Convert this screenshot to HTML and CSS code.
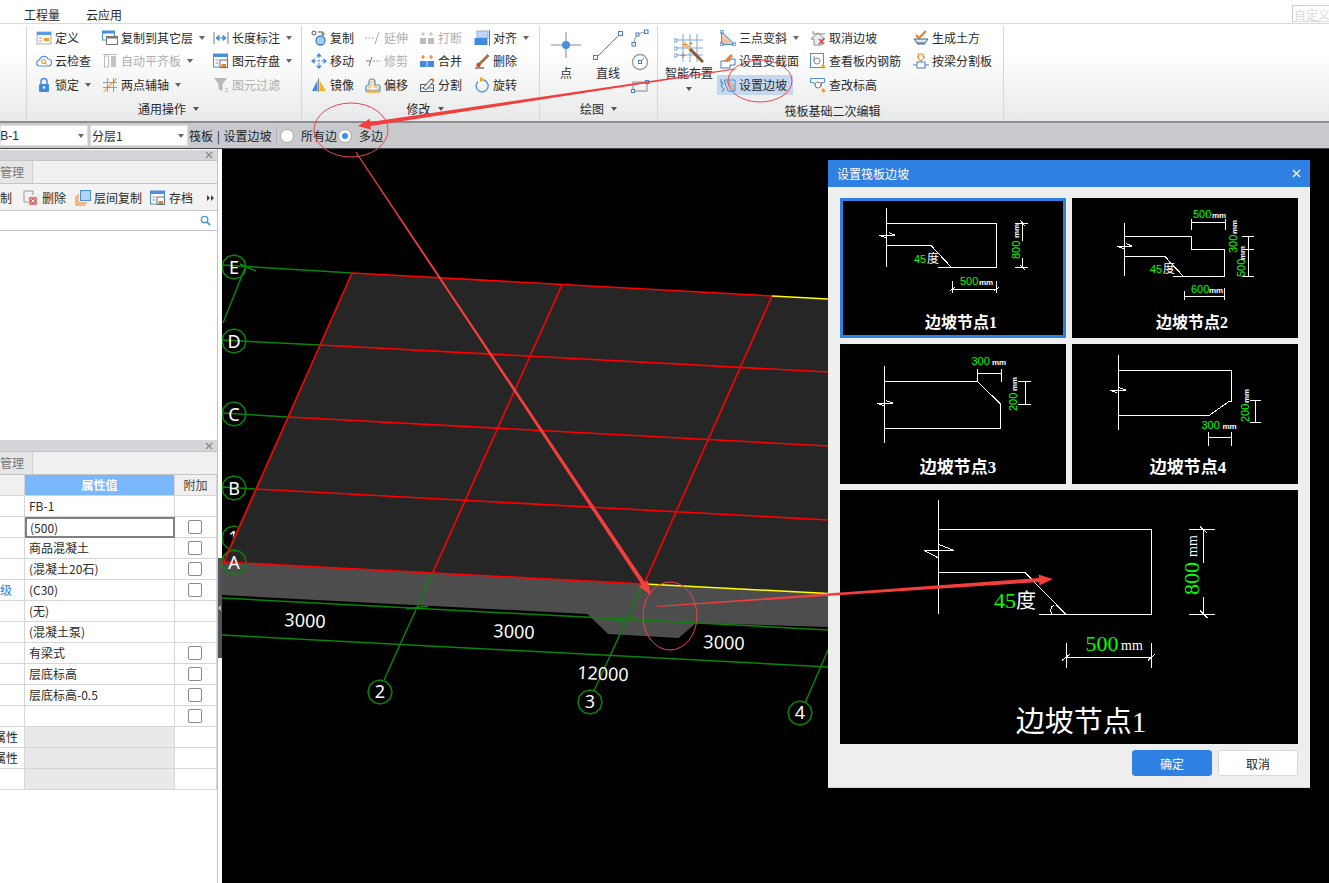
FILE: index.html
```html
<!DOCTYPE html>
<html lang="zh-CN">
<head>
<meta charset="utf-8">
<title>设置筏板边坡</title>
<link rel="stylesheet" href="styles.css">
</head>
<body>
<div class="app">
  <div class="topbar">
    <span class="tab">工程量</span>
    <span class="tab">云应用</span>
    <span class="custom">自定义界面</span>
  </div>

  <div class="ribbon">
    <div class="grp g0"><div class="stub">项</div></div>

    <div class="grp g1">
      <div class="cols">
        <div class="col c1">
          <div class="it"><svg class="ic" viewBox="0 0 16 16"><rect x="1" y="2" width="14" height="12" fill="#f6f6f6" stroke="#b0b0b0"/><rect x="1" y="2" width="14" height="3" fill="#5b9be0"/><path d="M3 8h3M3 11h3" stroke="#aaa"/><path d="M8 8h5v3H8z" fill="#f0a030"/></svg><span>定义</span></div>
          <div class="it"><svg class="ic" viewBox="0 0 16 16"><path d="M4 13a3 3 0 0 1-.5-6 4.500 4.500 0 0 1 8.500-1 3.500 3.500 0 0 1 0 7z" fill="#fff" stroke="#4f97e6" stroke-width="1.200"/><circle cx="7.500" cy="8.500" r="2" fill="none" stroke="#ee7d20"/><path d="M9 10l2 1.500" stroke="#ee7d20"/></svg><span>云检查</span></div>
          <div class="it"><svg class="ic" viewBox="0 0 16 16"><path d="M5 7V4.500a3 3 0 0 1 6 0V7" fill="none" stroke="#4a8fdc" stroke-width="1.500"/><rect x="3" y="7" width="10" height="8" rx="1" fill="#3f8be0"/><circle cx="8" cy="10.500" r="1.300" fill="#fff"/></svg><span>锁定</span><i class="caret"></i></div>
        </div>
        <div class="col c2">
          <div class="it"><svg class="ic" viewBox="0 0 16 16"><rect x="0.500" y="1" width="12" height="9" fill="#fff" stroke="#4a8fdc"/><rect x="0.500" y="1" width="12" height="2.500" fill="#4a8fdc"/><rect x="4.500" y="6.500" width="11" height="8" fill="#fff" stroke="#777"/><rect x="4.500" y="6.500" width="11" height="2" fill="#777"/></svg><span>复制到其它层</span><i class="caret"></i></div>
          <div class="it off"><svg class="ic" viewBox="0 0 16 16"><path d="M1 1.500h14" stroke="#bbb"/><rect x="2.500" y="3" width="4" height="11" fill="#fff" stroke="#bbb"/><rect x="9" y="3" width="5" height="11" fill="#c4c4c4"/></svg><span>自动平齐板</span><i class="caret"></i></div>
          <div class="it"><svg class="ic" viewBox="0 0 16 16"><path d="M5.500 1v14M11.500 1v14M1 5.500h14M1 10.500h14" stroke="#9a9a9a"/><path d="M1.500 15L14.500 1.500" stroke="#ee7d20"/></svg><span>两点辅轴</span><i class="caret"></i></div>
        </div>
        <div class="col c3">
          <div class="it"><svg class="ic" viewBox="0 0 16 16"><path d="M1 2v12M15 2v12" stroke="#777"/><path d="M3 8h10M3 8l3-2.500v5zM13 8l-3-2.500v5z" stroke="#4a8fdc" fill="#4a8fdc"/></svg><span>长度标注</span><i class="caret"></i></div>
          <div class="it"><svg class="ic" viewBox="0 0 16 16"><rect x="0.500" y="1" width="14" height="13" fill="#fff" stroke="#4a8fdc"/><rect x="0.500" y="1" width="14" height="3" fill="#4a8fdc"/><path d="M2.500 7h3M2.500 10h3" stroke="#888"/><rect x="7" y="7" width="7.500" height="7.500" fill="#fff" stroke="#5b6f85"/><rect x="8.500" y="11" width="4.500" height="3" fill="#ee7d20"/></svg><span>图元存盘</span><i class="caret"></i></div>
          <div class="it off"><svg class="ic" viewBox="0 0 16 16"><path d="M1 1h13L9.500 7v7l-4-2V7z" fill="#b8b8b8"/><path d="M12 12h3M12 14.500h3" stroke="#bbb"/></svg><span>图元过滤</span></div>
        </div>
      </div>
      <div class="lab"><span>通用操作</span><i class="caret dark"></i></div>
    </div>

    <div class="grp g2">
      <div class="cols">
        <div class="col m1">
          <div class="it"><svg class="ic" viewBox="0 0 16 16"><circle cx="3" cy="3" r="2" fill="#fff" stroke="#555"/><path d="M7 2h5v3M10.500 3.500L12 5.500l1.500-2" fill="none" stroke="#555"/><circle cx="9.500" cy="10.500" r="4.500" fill="#a9cdf2" stroke="#3f7fc5" stroke-width="1.300"/></svg><span>复制</span></div>
          <div class="it"><svg class="ic" viewBox="0 0 16 16"><path d="M8 0l3 3.500H5zM8 16l3-3.500H5zM0 8l3.500-3v6zM16 8l-3.500-3v6z" fill="#3f8be0"/><path d="M8 3v10M3 8h10" stroke="#3f8be0" stroke-dasharray="2 1.500"/></svg><span>移动</span></div>
          <div class="it"><svg class="ic" viewBox="0 0 16 16"><path d="M7.500 1v14" stroke="#888"/><path d="M6.500 3v11H1z" fill="#3f8be0"/><path d="M8.500 3v11H15z" fill="#f5b32e"/></svg><span>镜像</span></div>
        </div>
        <div class="col m2">
          <div class="it off"><svg class="ic" viewBox="0 0 16 16"><path d="M0 8h2M3.500 8h2M7 8h2" stroke="#aaa"/><path d="M14 2L10 14" stroke="#aaa"/></svg><span>延伸</span></div>
          <div class="it off"><svg class="ic" viewBox="0 0 16 16"><path d="M1 8h4M7 4L4 13" stroke="#777"/><path d="M8 8h2M11.500 8h2M14.500 8h1" stroke="#999"/></svg><span>修剪</span></div>
          <div class="it"><svg class="ic" viewBox="0 0 16 16"><path d="M1 14V10a2 2 0 0 1 2-2h1V5a3 3 0 0 1 6 0v3h3a2 2 0 0 1 2 2v4z" fill="#fff" stroke="#3f8be0" stroke-width="1.200"/><path d="M3 13v-2a1 1 0 0 1 1-1h2V5.500a1.500 1.500 0 0 1 3 0V10h3a1 1 0 0 1 1 1v2z" fill="none" stroke="#f5a623"/><path d="M1 15h14" stroke="#f5a623" stroke-width="1.300"/></svg><span>偏移</span></div>
        </div>
        <div class="col m3">
          <div class="it off"><svg class="ic" viewBox="0 0 16 16"><path d="M4 2v4M2 4h4M12 2v4M10 4h4" stroke="#bbb"/><rect x="1" y="8" width="6" height="6" fill="#bdbdbd"/><rect x="9" y="8" width="6" height="6" fill="#bdbdbd"/></svg><span>打断</span></div>
          <div class="it"><svg class="ic" viewBox="0 0 16 16"><path d="M4 2v4M2 4h4M12 2v4M10 4h4" stroke="#ee7d20" stroke-width="1.200"/><rect x="1" y="8" width="7" height="6" fill="#3f8be0"/><rect x="8" y="8" width="7" height="6" fill="#3f8be0"/><path d="M8 8v6" stroke="#cfe1f6"/></svg><span>合并</span></div>
          <div class="it"><svg class="ic" viewBox="0 0 16 16"><path d="M1.500 14.500V7.500h13v7z" fill="#fff" stroke="#4d5a68"/><path d="M1 11l13 0" stroke="#3f7fc5"/><path d="M4 11L12 2l2.500 2.500L7 13z" fill="#f3efe6" stroke="#555"/><path d="M12 2l2.500 2.500 1-1.500L13.500 1z" fill="#ee7d20"/></svg><span>分割</span></div>
        </div>
        <div class="col m4">
          <div class="it"><svg class="ic" viewBox="0 0 16 16"><rect x="3" y="1" width="11" height="7" fill="#bcd6f3" stroke="#8fb2d8"/><rect x="0.500" y="8" width="13" height="7" fill="#3f8be0"/><path d="M15.500 0v16" stroke="#777"/></svg><span>对齐</span><i class="caret"></i></div>
          <div class="it"><svg class="ic" viewBox="0 0 16 16"><path d="M1 15h9" stroke="#333"/><path d="M5 10L13.500 1.500l1.500 1.500-8.500 8.500z" fill="#b07a3c" stroke="#6d4a22" stroke-width=".6"/><circle cx="4.500" cy="12" r="2.200" fill="#c9492a"/></svg><span>删除</span></div>
          <div class="it"><svg class="ic" viewBox="0 0 16 16"><path d="M9.500 3A6 6 0 1 1 4 4.500" fill="none" stroke="#4a8fdc" stroke-width="1.300"/><path d="M6 0l5 2.500L6 5z" fill="#f5a623"/></svg><span>旋转</span></div>
        </div>
      </div>
      <div class="lab"><span>修改</span><i class="caret dark"></i></div>
    </div>

    <div class="grp g3">
      <div class="cols draw">
        <div class="big pt"><svg class="bigic" viewBox="0 0 32 32"><path d="M1 15h30M16 2v26" stroke="#888"/><circle cx="16" cy="15" r="4" fill="#4a8fdc"/></svg><span>点</span></div>
        <div class="big ln"><svg class="bigic" viewBox="0 0 32 32"><path d="M4 28L28 4" stroke="#777"/><rect x="1.500" y="25.500" width="4" height="4" fill="#fff" stroke="#3f7fc5"/><rect x="26.500" y="1.500" width="4" height="4" fill="#fff" stroke="#3f7fc5"/></svg><span>直线</span></div>
        <div class="small">
          <svg class="sic" viewBox="0 0 18 18"><path d="M3 15C3 8 7 4 14 3" fill="none" stroke="#888"/><rect x="1" y="13.500" width="3.500" height="3.500" fill="#fff" stroke="#3f7fc5"/><rect x="5" y="4" width="3" height="3" fill="#fff" stroke="#3f7fc5"/><rect x="13.500" y="1" width="3.500" height="3.500" fill="#fff" stroke="#3f7fc5"/></svg>
          <svg class="sic" viewBox="0 0 18 18"><circle cx="9" cy="9" r="7.500" fill="#fff" stroke="#999" stroke-width="1.300"/><path d="M9 9l4-4" stroke="#888"/><rect x="7.500" y="7.500" width="3" height="3" fill="#fff" stroke="#3f7fc5"/></svg>
          <svg class="sic" viewBox="0 0 18 18"><rect x="2" y="5" width="14" height="9" fill="none" stroke="#888"/><rect x="0.500" y="12.500" width="3" height="3" fill="#fff" stroke="#3f7fc5"/><rect x="14.500" y="3.500" width="3" height="3" fill="#fff" stroke="#3f7fc5"/></svg>
        </div>
      </div>
      <div class="lab"><span>绘图</span><i class="caret dark"></i></div>
    </div>

    <div class="grp g4">
      <div class="cols">
        <div class="big wiz"><svg class="wizic" viewBox="0 0 30 30"><path d="M9 1v28M16 1v28M23 1v28M1 7h28M1 15h28M1 22h28" stroke="#7aa7d9"/><path d="M0 6h3v3H0zM0 14h3v3H0zM0 21h3v3H0z" fill="#fff" stroke="#3f7fc5" stroke-width=".7"/><path d="M13 13l16 16" stroke="#8a5a30" stroke-width="3"/><path d="M13 13l3 3" stroke="#f2c27a" stroke-width="3"/><path d="M11 9v5M8.500 11.500h5M17 9v3M15.500 10.500h3M9 20v5M6.500 22.500h5" stroke="#ee7d20"/></svg><span>智能布置</span><i class="caret dark"></i></div>
        <div class="col s1">
          <div class="it"><svg class="ic" viewBox="0 0 16 16"><path d="M1.500 1.500V14.500H14.500z" fill="#f6c49c" stroke="#4a8fdc"/><rect x="0" y="0" width="3" height="3" fill="#fff" stroke="#3f7fc5"/><rect x="0" y="13" width="3" height="3" fill="#fff" stroke="#3f7fc5"/><rect x="13" y="13" width="3" height="3" fill="#fff" stroke="#3f7fc5"/></svg><span>三点变斜</span><i class="caret"></i></div>
          <div class="it"><svg class="ic" viewBox="0 0 16 16"><path d="M1 8h9v-2h5v6H10v3H1z" fill="#fff" stroke="#3f7fc5"/><path d="M4 8L11 1l2 2-6 6z" fill="#ee7d20"/></svg><span>设置变截面</span></div>
          <div class="it hl"><svg class="ic" viewBox="0 0 16 16"><path d="M1 2v4h2l-2 3 3 3-2 3" fill="none" stroke="#3f7fc5"/><path d="M4 3h11v11H8z" fill="none" stroke="#4a8fdc"/><path d="M6 4l8 9M9 4l5 6" stroke="#ee7d20"/></svg><span>设置边坡</span></div>
        </div>
        <div class="col s2">
          <div class="it"><svg class="ic" viewBox="0 0 16 16"><path d="M3 1v3h12M1 9l7-6 7 6H12v6H4V9z" fill="#eee" stroke="#8e8e8e"/><path d="M9 9l5 5M14 9l-5 5" stroke="#e0433c" stroke-width="1.500"/></svg><span>取消边坡</span></div>
          <div class="it"><svg class="ic" viewBox="0 0 16 16"><rect x="0.500" y="0.500" width="13" height="14" fill="#fff" stroke="#4a8fdc"/><circle cx="7" cy="8" r="3" fill="none" stroke="#888"/><path d="M4 3v5" stroke="#888"/><path d="M13 11l3 3-3 2-2-3z" fill="#f5a623"/></svg><span>查看板内钢筋</span></div>
          <div class="it"><svg class="ic" viewBox="0 0 16 16"><path d="M0.500 1.500h14v4h-3V9H6L3.500 5.500h-3z" fill="#fff" stroke="#4a8fdc"/><circle cx="8" cy="8" r="3" fill="#fff" stroke="#777"/><path d="M13 11l3 3-3 2-2-3z" fill="#f5a623"/></svg><span>查改标高</span></div>
        </div>
        <div class="col s3">
          <div class="it"><svg class="ic" viewBox="0 0 16 16"><path d="M3 5l3 3 7-7" fill="none" stroke="#ee7d20" stroke-width="2"/><path d="M1 9h14l-3 4H4zM4 14h8" fill="#dfe7f0" stroke="#3f5a78"/></svg><span>生成土方</span></div>
          <div class="it"><svg class="ic" viewBox="0 0 16 16"><path d="M5 1h5v3h2l-4 4-4-4h2z" fill="#fff" stroke="#ee7d20"/><rect x="4" y="9" width="8" height="6" fill="#fff" stroke="#3f7fc5"/><path d="M0 12h4M12 12h4" stroke="#3f7fc5"/></svg><span>按梁分割板</span></div>
        </div>
      </div>
      <div class="lab low"><span>筏板基础二次编辑</span></div>
    </div>
  </div>

  <div class="optbar">
    <div class="sel s-a"><span class="cutf">FB-1</span><i class="caret"></i></div>
    <div class="sel s-b"><span>分层1</span><i class="caret"></i></div>
    <span class="crumb">筏板 | 设置边坡</span>
    <span class="vsep"></span>
    <span class="radio"></span><span class="rlab">所有边</span>
    <span class="radio on"></span><span class="rlab">多边</span>
  </div>

  <div class="main">
    <aside class="side">
      <section class="panel top">
        <div class="pbar"><svg class="x" viewBox="0 0 8 8"><path d="M1 1l6 6M7 1L1 7" stroke="#888" stroke-width="1.300"/></svg></div>
        <div class="ptabs"><span class="ptab">管理</span></div>
        <div class="tools">
          <span class="tl t-a"><span class="cutl">复制</span></span>
          <span class="tl t-b"><svg class="ic" viewBox="0 0 16 16"><path d="M1 1h9v4M1 1v11h4" fill="none" stroke="#999"/><rect x="6" y="7" width="8" height="8" fill="#e8625a" stroke="#c9c9c9"/><path d="M8 9l4 4M12 9l-4 4" stroke="#fff"/></svg><span>删除</span></span>
          <span class="tl t-c"><svg class="ic" viewBox="0 0 16 16"><path d="M1 6v9h9M3 4v9h9" fill="none" stroke="#ee7d20"/><rect x="5.500" y="0.500" width="10" height="10" fill="#b4d3f6" stroke="#4a8fdc"/></svg><span>层间复制</span></span>
          <span class="tl t-d"><svg class="ic" viewBox="0 0 16 16"><rect x="0.500" y="1" width="14" height="13" fill="#fff" stroke="#4a8fdc"/><rect x="0.500" y="1" width="14" height="3" fill="#4a8fdc"/><path d="M2.500 7h3M2.500 10h3" stroke="#888"/><rect x="7" y="7" width="7.500" height="7.500" fill="#fff" stroke="#5b6f85"/><rect x="8.500" y="11" width="4.500" height="3" fill="#ee7d20"/></svg><span>存档</span></span>
          <svg class="more" viewBox="0 0 8 8"><path d="M0 1l3 3-3 3zM4 1l3 3-3 3z" fill="#444"/></svg>
        </div>
        <div class="search"><svg class="mag" viewBox="0 0 12 12"><circle cx="5" cy="5" r="3.500" fill="none" stroke="#4a9bd0" stroke-width="1.500"/><path d="M7.500 7.500L11 11" stroke="#4a9bd0" stroke-width="2"/></svg></div>
      </section>
      <section class="panel bottom">
        <div class="pbar"><svg class="x" viewBox="0 0 8 8"><path d="M1 1l6 6M7 1L1 7" stroke="#888" stroke-width="1.300"/></svg></div>
        <div class="ptabs"><span class="ptab">管理</span></div>
        <div class="tbl">
          <div class="c hd"></div><div class="c hd val">属性值</div><div class="c hd add">附加</div>
          <div class="c"></div><div class="c">FB-1</div><div class="c"></div>
          <div class="c"></div><div class="c cur">(500)</div><div class="c"><i class="cb"></i></div>
          <div class="c"></div><div class="c">商品混凝土</div><div class="c"><i class="cb"></i></div>
          <div class="c"></div><div class="c">(混凝土20石)</div><div class="c"><i class="cb"></i></div>
          <div class="c blue">级</div><div class="c">(C30)</div><div class="c"><i class="cb"></i></div>
          <div class="c"></div><div class="c">(无)</div><div class="c"></div>
          <div class="c"></div><div class="c">(混凝土泵)</div><div class="c"></div>
          <div class="c"></div><div class="c">有梁式</div><div class="c"><i class="cb"></i></div>
          <div class="c"></div><div class="c">层底标高</div><div class="c"><i class="cb"></i></div>
          <div class="c"></div><div class="c">层底标高-0.5</div><div class="c"><i class="cb"></i></div>
          <div class="c"></div><div class="c"></div><div class="c"><i class="cb"></i></div>
          <div class="c cutn"><span>属性</span></div><div class="c gr"></div><div class="c"></div>
          <div class="c cutn"><span>属性</span></div><div class="c gr"></div><div class="c"></div>
          <div class="c"></div><div class="c gr"></div><div class="c"></div>
        </div>
      </section>
    </aside>
    <div class="split"><span class="grip"><i></i></span></div>

    <div class="canvas">
      <svg class="cad3d" viewBox="222 149 1107 734">
        <defs><polygon id="oct" points="12,0 10.400,6 6,10.400 0,12 -6,10.400 -10.400,6 -12,0 -10.400,-6 -6,-10.400 0,-12 6,-10.400 10.400,-6"/></defs>
        <g class="gl">
          <use href="#oct" x="234" y="267"/><use href="#oct" x="234" y="341"/><use href="#oct" x="234" y="414"/><use href="#oct" x="234" y="488"/><use href="#oct" x="234" y="538"/><use href="#oct" x="234" y="562"/>
          <use href="#oct" x="380" y="692"/><use href="#oct" x="590" y="702"/><use href="#oct" x="800" y="713"/>
          <path d="M222 265L352 273M222 340L320 345M222 413L288 417M222 487L256 489M245 268L223 323M240 264L256 271"/>
        </g>
        <text class="num" x="233.500" y="543.500">1</text>
        <polygon class="slab" points="352,273 828,299 828,594 222,562"/>
        <polygon class="face" points="222,562 645,584 828,593.500 828,627 696,623 678.500,638 608,634 587.600,614 222,595"/>
        <use class="gl" href="#oct" x="234" y="562"/>
        <g class="gl">
          <path d="M222 598L828 630M222 635L828 667M433 572L384 680M642 586L594 691M828 650L805 703M406 609L428 606M616 621L638 617"/>
        </g>
        <g class="rd">
          <path d="M352 273L772 296M320 345L828 372M288 417L828 446M256 489L828 520M222 562L645 584M352 273L224 562M562 285L433 572M772 296L644 584"/>
        </g>
        <path class="yl" d="M772 296L828 299M645 584L828 593.500"/>
        <g class="num">
          <text x="234" y="273.500">E</text><text x="234" y="347.500">D</text><text x="234" y="420.500">C</text><text x="234" y="494.500">B</text><text x="234" y="568.500">A</text>
          <text x="380" y="698">2</text><text x="590" y="708">3</text><text x="800" y="719">4</text>
          <text transform="rotate(3 305 621)" x="305" y="627">3000</text>
          <text transform="rotate(3 514 632)" x="514" y="638">3000</text>
          <text transform="rotate(3 724 643)" x="724" y="649">3000</text>
          <text transform="rotate(3 603 674)" x="603" y="680">12000</text>
        </g>
      </svg>

      <div class="dialog">
        <div class="dtitle"><span>设置筏板边坡</span><svg class="dclose" viewBox="0 0 10 10"><path d="M1 1l8 8M9 1L1 9" stroke="#fff" stroke-width="1.500"/></svg></div>
        <div class="thumbs">
          <svg class="thumb sel1" viewBox="840 198 226 140">
            <path class="w" d="M886.500 208V266.700M886.500 223.500H996.500V267.500H938M886.500 245.500H931L951.500 267.500M879 235L894.500 235L889 232.500M879 235L886 238M952 281V293M996.500 281V293M950 291L955 287M994 291L999 287M952 289.500H996.500M1015 223.500H1028M1015 267.500H1028M1022.500 223.500V241M1022.500 258V267.500M1020 220L1025 226M1020 265L1025 270"/>
            <text class="sm g" x="914" y="263">45</text><text class="cj w" x="927" y="263">度</text>
            <text class="sm g" x="960" y="285">500</text><text class="mm" x="979" y="285">mm</text>
            <text class="sm g" transform="rotate(-90 1020 259)" x="1020" y="259">800</text><text class="mm" transform="rotate(-90 1019 238)" x="1019" y="238">mm</text>
            <text class="tt" x="961" y="328">边坡节点1</text>
          </svg>
          <svg class="thumb" viewBox="1072 198 226 140">
            <path class="w" d="M1124.500 222.500V275.500M1124.500 236.500H1191.500V249.500H1224.500V276.500H1172.500M1124.500 256.500H1165L1183.500 276.500M1117 246L1132 246L1126 243.500M1117 246L1124 249M1191 219V230M1225 219V230M1191 222H1225M1184.500 291V300M1224.500 288V300M1184.500 296.500H1224.500M1242 236.500H1254M1242 249.500H1254M1242 276.500H1254M1248.500 236.500V276.500"/>
            <text class="sm g" x="1150" y="273">45</text><text class="cj w" x="1163" y="273">度</text>
            <text class="sm g" x="1193" y="218">500</text><text class="mm" x="1212" y="218">mm</text>
            <text class="sm g" x="1191" y="293">600</text><text class="mm" x="1209" y="293">mm</text>
            <text class="sm g" transform="rotate(-90 1237 253)" x="1237" y="253">300</text><text class="mm" transform="rotate(-90 1237 234)" x="1237" y="234">mm</text>
            <text class="sm g" transform="rotate(-90 1245 277)" x="1245" y="277">500</text><text class="mm" transform="rotate(-90 1245 260)" x="1245" y="260">mm</text>
            <text class="tt" x="1192" y="328">边坡节点2</text>
          </svg>
          <svg class="thumb" viewBox="840 344 226 140">
            <path class="w" d="M884.500 366V442.500M884.500 381.500H977.500L1000.500 404V428.500H884.500M877 403L892.500 403L886 400.500M877 403L884 406M977.500 369V382M1001 369V382M977.500 373.500H1001M1018 381.500H1031M1018 404H1031M1025.500 381.500V404"/>
            <text class="sm g" x="971.500" y="365">300</text><text class="mm" x="992" y="365">mm</text>
            <text class="sm g" transform="rotate(-90 1017 411)" x="1017" y="411">200</text><text class="mm" transform="rotate(-90 1017 391)" x="1017" y="391">mm</text>
            <text class="tt tw" x="958" y="473">边坡节点3</text>
          </svg>
          <svg class="thumb" viewBox="1072 344 226 140">
            <path class="w" d="M1118.500 354.500V429.500M1118.500 370.500H1231.500V401L1229 401.500L1209 415.500H1118.500M1110 390L1125.500 390L1119 387.500M1110 390L1117 393M1250 400H1261M1250 422.500H1261M1255.500 400V422.500M1208.500 432V446M1231.500 432V446M1208.500 437.500H1231.500"/>
            <text class="sm g" x="1201.500" y="429">300</text><text class="mm" x="1222.500" y="429">mm</text>
            <text class="sm g" transform="rotate(-90 1249 422)" x="1249" y="422">200</text><text class="mm" transform="rotate(-90 1249 403)" x="1249" y="403">mm</text>
            <text class="tt tw" x="1188" y="473">边坡节点4</text>
          </svg>
          <svg class="thumb wide" viewBox="840 490 458 254">
            <path class="w" d="M938.500 500V613.500M938.500 529.500H1151.500V614H1039M938.500 572.500H1025L1065.500 614M924 550.500H954L939 544.500M924 550.500L938.500 558M1066.500 643V667.500M1151.500 643V667.500M1062 660.500L1070 654M1148 660.500L1155 654M1066.500 657.500H1151.500M1189 529.500H1215M1189 614H1215M1203.500 529.500V562.500M1203.500 597V614M1200 526.500L1207.500 533.500M1200 610.500L1207.500 618M1052 614A6 6 0 0 1 1054 605"/>
            <text class="lg g" x="994" y="608">45</text><text class="lgc w" x="1016" y="608">度</text>
            <text class="lg g" x="1085.500" y="651">500</text><text class="lgm" x="1121" y="650">mm</text>
            <text class="lg g" transform="rotate(-90 1199 595)" x="1199" y="595">800</text><text class="lgm" transform="rotate(-90 1197 557)" x="1197" y="557">mm</text>
            <text class="tb" x="1081" y="732">边坡节点1</text>
          </svg>
        </div>
        <div class="dfoot">
          <button class="btn pri" type="button">确定</button>
          <button class="btn" type="button">取消</button>
        </div>
      </div>
    </div>
  </div>

  <svg class="notes" viewBox="0 0 1329 883">
    <ellipse cx="351" cy="130" rx="37" ry="27"/>
    <ellipse cx="760" cy="81" rx="32" ry="21"/>
    <ellipse cx="670" cy="616" rx="27" ry="34"/>
    <polygon points="735,68.500 735,69.500 370.500,126.100 371,129.500 358,126 369.700,118.700 370,122.100"/>
    <polygon points="356.500,152 355.500,152.500 641.500,584.500 638.600,586.400 651,595 647.800,580.400 644.900,582.300"/>
    <polygon points="657,606 657,607 1039.100,582 1039.400,585.500 1053,579 1038.600,574.500 1038.900,578"/>
  </svg>
</div>
</body>
</html>
```
FILE: styles.css
```css
*{box-sizing:border-box}
html,body{margin:0;padding:0;background:#fff}
body{font:12px/16px "Noto Sans CJK SC","Liberation Sans",sans-serif;color:#2a2a2a}
.app{position:relative;width:1329px;height:883px;overflow:hidden;display:flex;flex-direction:column}
i{font-style:normal;display:block}

/* top tabs */
.topbar{height:24px;flex:none;display:flex;align-items:flex-start;padding:7px 0 0 24px;gap:26px;border-bottom:1px solid #d9d9d9;position:relative}
.custom{position:absolute;right:-20px;top:5px;width:57px;height:17px;border:1px solid #ccc;border-bottom-color:#ddd;background:#fff;color:#e4d8d4;padding-left:1px;white-space:nowrap;overflow:hidden;line-height:17px}

/* ribbon */
.ribbon{height:97px;flex:none;display:flex;background:linear-gradient(#fff 30%,#e8e9ea)}
.grp{display:flex;flex-direction:column;height:94px;margin-top:2px;border-right:1px solid #d6d6d6}
.g0{width:27px}
.stub{margin:27px 0 0 -12px;line-height:16px}
.g1{width:275px;padding-left:9px}
.g2{width:238px;padding-left:9px}
.g3{width:118px}
.g4{width:346px}
.cols{display:flex;height:71px;flex:none}
.col{display:grid;grid-auto-rows:23.5px;flex:none}
.c1{width:66px}.c2{width:111px}.c3{width:75px}
.m1,.m2{width:54px}.m3{width:55px}.m4{width:60px}
.s1{width:90px}.s2{width:103px}.s3{width:90px}
.it{display:flex;align-items:center;white-space:nowrap;height:23.5px}
.ic{width:16px;height:16px;flex:none;margin-right:3px;display:block}
.it .caret{margin-left:6px}
.off{color:#aeaeae}
.caret{width:0;height:0;border:3px solid transparent;border-top:4px solid #666;border-bottom:0}
.caret.dark{border-top-color:#555}
.lab{flex:1;display:flex;align-items:center;justify-content:center;gap:7px}
.lab.low{padding:4px 0 0 4px}
.hl{background:#c5d8f0;width:76px;height:20px;align-self:center;margin-left:-3px;padding-left:3px}
.big{display:flex;flex-direction:column;align-items:center;flex:none}
.draw{padding-left:10px}
.pt{width:32px}
.ln{width:32px;margin-left:10px}
.bigic{width:32px;height:32px;display:block;margin-top:4px}
.pt>span,.ln>span{margin-top:3px}
.small{display:grid;grid-auto-rows:24px;margin-left:7px}
.sic{width:18px;height:18px;display:block;margin-top:3px}
.wiz{width:62px}
.wizic{width:30px;height:30px;display:block;margin-top:7px}
.wiz>span{margin-top:2px}
.wiz>.caret{margin-top:6px}

/* option bar */
.optbar{height:28px;flex:none;display:flex;align-items:center;background:#c8cacd;border-top:2px solid #8e8e8e;border-bottom:1px solid #444}
.sel{height:21px;background:#fff;display:flex;align-items:center;justify-content:space-between;padding:0 3px 0 1px;overflow:hidden;margin-right:2px;border:1px solid #ddd}
.s-a{width:88px;padding-left:0}
.s-b{width:98px}
.cutf{margin-left:-8px;font-family:"Liberation Sans",sans-serif;font-size:12px}
.crumb{color:#222;white-space:nowrap;margin-left:-1px;width:87px;word-spacing:1px}
.vsep{width:1px;height:18px;background:#b0b2b5;margin-right:3px}
.radio{width:14px;height:14px;border-radius:50%;background:#fff;border:1px solid #a8a8a8;margin-right:7px;flex:none;position:relative}
.radio.on::after{content:"";position:absolute;left:3px;top:3px;width:6px;height:6px;border-radius:50%;background:#3c8df0}
.rlab{color:#222;white-space:nowrap}
.radio+.rlab{margin-right:1px}

/* main */
.main{flex:1;display:flex;min-height:0}
.side{width:218px;flex:none;border-right:1px solid #bfc1c4;display:flex;flex-direction:column;background:#fff;overflow:hidden}
.panel.top{height:291px;flex:none;padding-top:1px}
.panel.bottom{flex:1}
.pbar{height:11px;background:#d5d6da;display:flex;justify-content:flex-end;align-items:center;padding-right:4px;border-bottom:1px solid #c4c5c9}
.bottom .pbar{height:12px}
.x{width:8px;height:8px;display:block}
.ptabs{height:23px;background:#f0f0f0;border-bottom:1px solid #c4c5c9;display:flex}
.ptab{width:33px;background:#e6e6e6;border-right:1px solid #cfcfcf;color:#777;line-height:22px;font-size:12px}
.tools{height:27px;padding-top:1px;background:#f3f3f3;display:flex;align-items:center;position:relative;white-space:nowrap;border-bottom:1px solid #c4c5c9;overflow:hidden}
.tl{display:flex;align-items:center;flex:none}
.cutl{margin-left:-12px}
.t-a{width:23px}
.t-b{width:52px}
.t-c{width:75px}
.t-d{width:57px}
.more{width:8px;height:8px;display:block;flex:none}
.search{height:20px;background:#fff;border-bottom:1px solid #c4c5c9;display:flex;justify-content:flex-end;align-items:center;padding-right:6px}
.mag{width:11px;height:11px;display:block}

/* property table */
.tbl{display:grid;grid-template-columns:25px 150px 42px;grid-auto-rows:21px}
.c{border-right:1px solid #d6d6d6;border-bottom:1px solid #d6d6d6;padding-left:4px;line-height:20px;white-space:nowrap;overflow:hidden;color:#2a2a2a;display:block}
.hd{background:#f0f0f0;color:#444;text-align:center;padding-left:0}
.val{background:#7ab8fb;color:#fff;font-weight:700}
.add{background:#f0f0f0}
.cur{border:2px solid #808080;line-height:17px;padding-left:3px}
.blue{color:#2e7ee0;padding-left:0}
.gr{background:#e9e9e9}
.cutn{padding-left:0}
.cutn span{margin-left:-6px;display:block}
.cb{width:14px;height:14px;border:1px solid #8a8a8a;border-radius:2px;background:#fff;margin:3px 0 0 13px}
.c:has(.cb){padding-left:0}

/* splitter */
.split{width:4px;flex:none;background:#fff;position:relative}
.grip{display:flex;align-items:center;position:absolute;left:0;top:409px;width:4px;height:100px;background:#50555c}
.grip i{width:0;height:0;border:3px solid transparent;border-right:3px solid #bbb;border-left:0}

/* canvas */
.canvas{flex:1;background:#000;position:relative;overflow:hidden}
.cad3d{display:block;width:1107px;height:734px}
.slab{fill:#262626}
.face{fill:#4d4d4d}
.gl *,.gl{fill:none;stroke:#0a840a;stroke-width:1.500}
.rd{fill:none;stroke:#f00;stroke-width:1.600}
.yl{fill:none;stroke:#ff0;stroke-width:1.600}
.num,.num text{fill:#fff;font:18px "Noto Sans","Liberation Sans",sans-serif;text-anchor:middle}

/* dialog */
.dialog{position:absolute;left:606px;top:11px;width:482px;height:628px;background:#eee;display:flex;flex-direction:column;border-bottom:1px solid #cfd4dc}
.dtitle{height:27px;flex:none;background:#2f80e3;color:#fff;display:flex;align-items:center;justify-content:space-between;padding:0 9px 0 9px;font-size:12px}
.dclose{width:9px;height:9px;display:block}
.thumbs{display:grid;grid-template-columns:226px 226px;grid-template-rows:140px 140px 254px;gap:6px;padding:11px 12px 0}
.thumb{display:block;width:226px;height:140px;background:#000}
.sel1{outline:3px solid #2f80e3;outline-offset:-3px}
.wide{grid-column:1 / span 2;width:458px;height:254px}
.w{fill:none;stroke:#fff;stroke-width:1;shape-rendering:crispEdges}
text.w{stroke:none;fill:#fff}
.g{fill:#0f0}
.sm{font:11px "Liberation Sans",sans-serif}
.cj{font:12px "Noto Sans CJK SC",sans-serif}
.mm{font:700 8px "Liberation Sans",sans-serif;fill:#fff}
.tt{font:700 16px "Liberation Serif","Noto Sans CJK SC",serif;fill:#fff;text-anchor:middle}
.tw{font-size:17px}
.lg{font:22px "Liberation Serif",serif}
.lgc{font:20px "Noto Sans CJK SC",serif}
.lgm{font:14px "Liberation Serif",serif;fill:#fff}
.tb{font:29px "Liberation Serif","Noto Sans CJK SC",serif;fill:#fff;text-anchor:middle}
.dfoot{display:flex;justify-content:flex-end;gap:6px;padding:6px 12px 0}
.btn{width:80px;height:26px;border:1px solid #d8d8d8;border-radius:3px;background:#fff;color:#222;font:12px "Noto Sans CJK SC",sans-serif;padding:0}
.pri{background:#2f80e3;border-color:#2f80e3;color:#fff}

/* hand-drawn red annotations */
.notes{position:absolute;left:0;top:0;width:1329px;height:883px;pointer-events:none}
.notes ellipse{fill:none;stroke:#e8474c;stroke-width:1}
.notes polygon{fill:#f43d3d}
```
